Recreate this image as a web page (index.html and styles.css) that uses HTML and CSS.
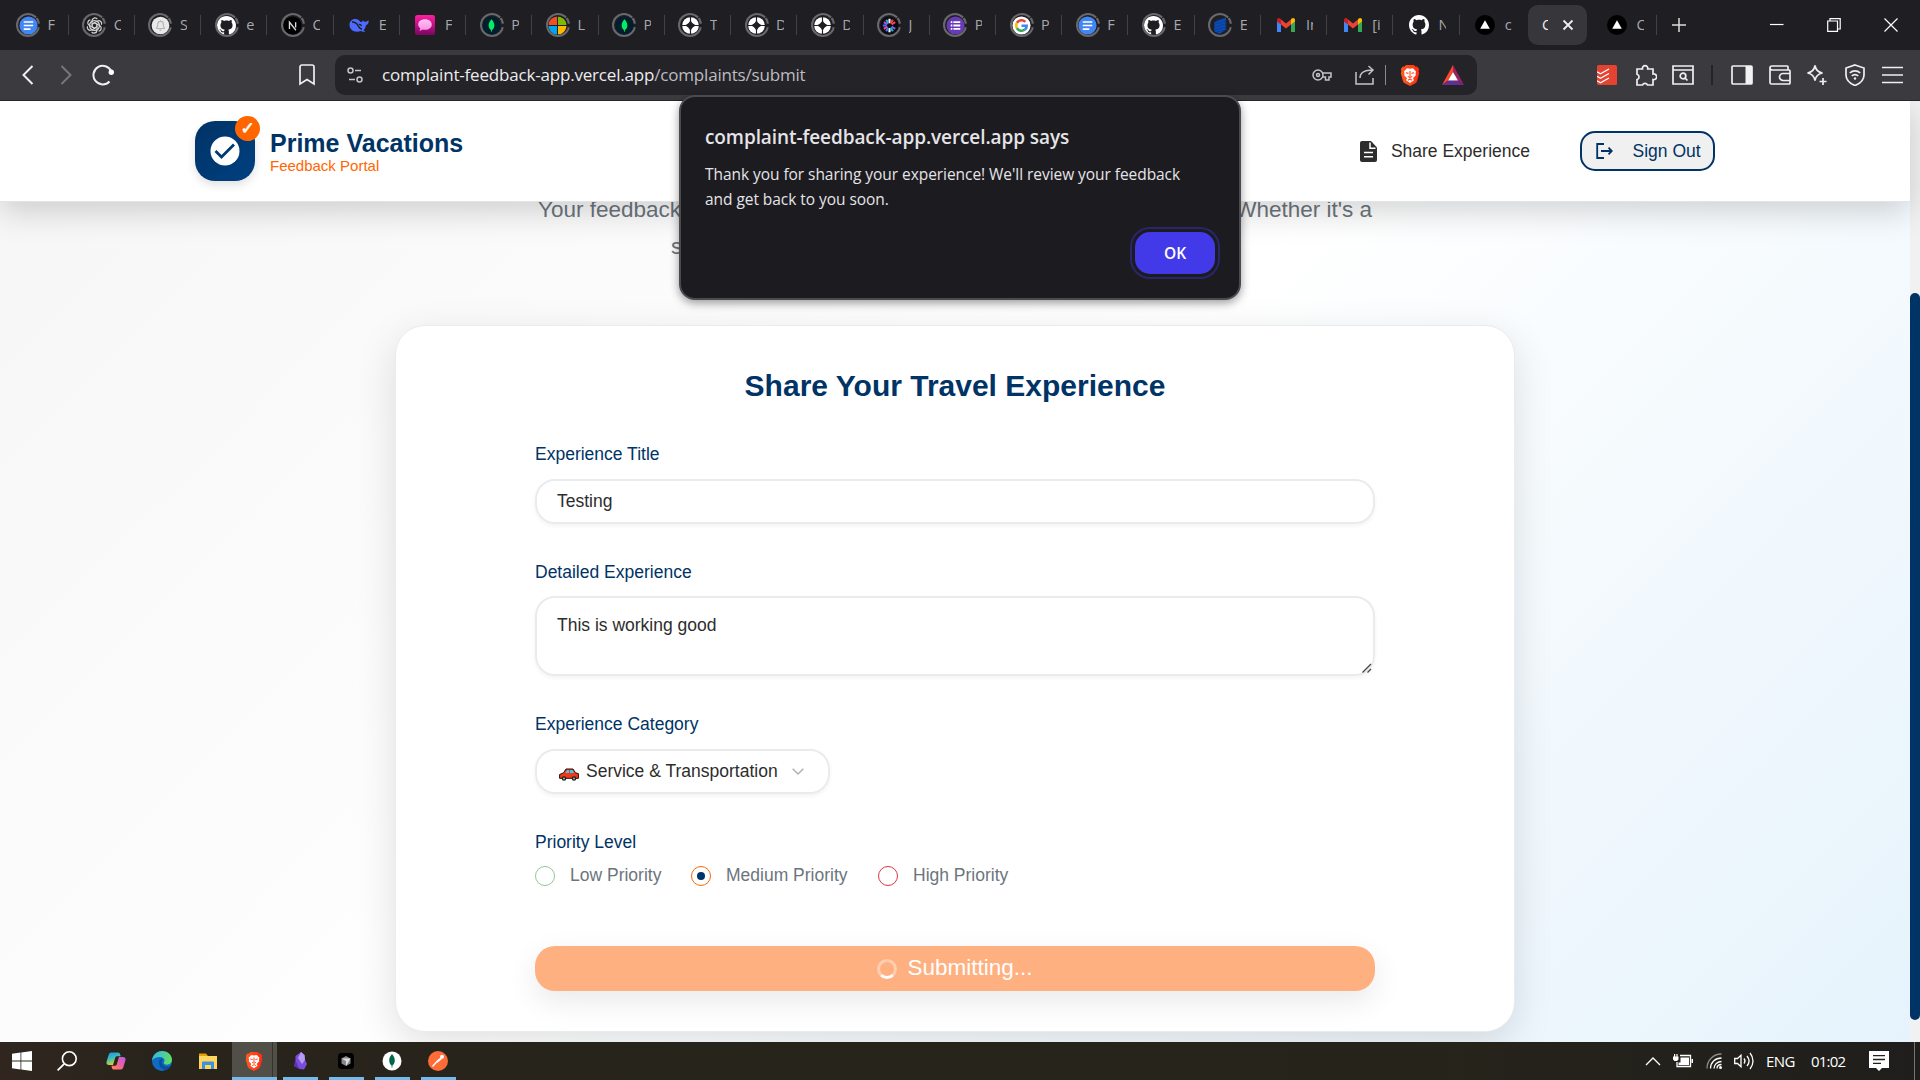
FILE: index.html
```html
<!DOCTYPE html>
<html lang="en">
<head>
<meta charset="utf-8">
<title>Prime Vacations – Feedback Portal</title>
<link rel="stylesheet" href="styles.css">
</head>
<body>
<svg class="defs" width="0" height="0" aria-hidden="true">
  <defs>
    <linearGradient id="gPink" x1="0" y1="0" x2="0" y2="1"><stop offset="0" stop-color="#ff1fa0"/><stop offset="1" stop-color="#7a0563"/></linearGradient>
    <linearGradient id="gBubble" x1="0" y1="0" x2="0" y2="1"><stop offset="0" stop-color="#ffc4f2"/><stop offset="1" stop-color="#ff8ae6"/></linearGradient>
    <linearGradient id="gEdge" x1="0" y1="0" x2="1" y2="0.3"><stop offset="0" stop-color="#2fb4ee"/><stop offset="1" stop-color="#5fdc6a"/></linearGradient>
    <linearGradient id="gCoA" x1="0" y1="0" x2="0.4" y2="1"><stop offset="0" stop-color="#1d8df0"/><stop offset="0.55" stop-color="#3bc3b4"/><stop offset="1" stop-color="#f5c624"/></linearGradient>
    <linearGradient id="gCoB" x1="1" y1="0" x2="0" y2="1"><stop offset="0" stop-color="#b05cf0"/><stop offset="0.5" stop-color="#f0609a"/><stop offset="1" stop-color="#fb8b50"/></linearGradient>
    <linearGradient id="gBrave" x1="0" y1="0" x2="1" y2="0"><stop offset="0" stop-color="#ff5a1f"/><stop offset="1" stop-color="#ff2c12"/></linearGradient>
  </defs>
  <symbol id="docs" viewBox="0 0 20 20"><circle cx="10" cy="10" r="9.500" fill="#4285f4"/><path d="M5 6.300h10M5 10h10M5 13.800h7" stroke="#fff" stroke-width="1.700"/></symbol>
  <symbol id="gpt" viewBox="0 0 20 20"><g fill="none" stroke="#d4d4d4" stroke-width="1.300"><path id="petal" d="M10 7.200 7.400 8.800V4.900a3.100 3.100 0 0 1 5.600-1.600"/><use href="#petal" transform="rotate(60 10 10)"/><use href="#petal" transform="rotate(120 10 10)"/><use href="#petal" transform="rotate(180 10 10)"/><use href="#petal" transform="rotate(240 10 10)"/><use href="#petal" transform="rotate(300 10 10)"/><circle cx="10" cy="10" r="5.200"/></g></symbol>
  <symbol id="bell" viewBox="0 0 20 20"><circle cx="10" cy="10" r="9.300" fill="#e9e9e9"/><path d="M6 13.200V12l1-1.200V8.600a3 3 0 0 1 6 0v2.200l1 1.200v1.200zM9 14.800h2M10 4.500v1" fill="none" stroke="#b3b3b3" stroke-width="1.200"/></symbol>
  <symbol id="github" viewBox="0 0 16 16"><path fill="#fff" d="M8 0C3.580 0 0 3.580 0 8c0 3.540 2.290 6.530 5.470 7.590.4.070.55-.17.55-.38 0-.19-.01-.82-.01-1.490-2.010.37-2.530-.49-2.690-.94-.09-.23-.48-.94-.82-1.130-.28-.15-.68-.52-.01-.53.63-.01 1.080.58 1.230.82.72 1.210 1.870.87 2.330.66.07-.52.28-.87.51-1.070-1.780-.2-3.640-.89-3.640-3.950 0-.87.31-1.590.82-2.150-.08-.2-.36-1.020.08-2.120 0 0 .67-.21 2.200.82.64-.18 1.320-.27 2-.27s1.360.09 2 .27c1.530-1.040 2.200-.82 2.200-.82.44 1.100.16 1.920.08 2.120.51.56.82 1.270.82 2.150 0 3.070-1.870 3.750-3.650 3.950.29.25.54.73.54 1.480 0 1.070-.01 1.930-.01 2.200 0 .21.15.46.55.38A8.010 8.010 0 0 0 16 8c0-4.420-3.580-8-8-8z"/></symbol>
  <symbol id="next" viewBox="0 0 20 20"><circle cx="10" cy="10" r="9.600" fill="#000"/><path d="M6.800 13.800V6.500l6.800 8.500M13.300 6.500v5.500" fill="none" stroke="#ddd" stroke-width="1.400"/></symbol>
  <symbol id="whale" viewBox="0 0 20 20"><path fill="#4d6bfe" d="M.5 9.500C.8 5.500 4 3.600 7.800 4.200c1.600.3 2 1 3 2 1.700 1.500 2.700 1.200 3-1.200.5 1 1 1.700 2.200 1.700 1.500 0 2.400-.7 3.600-1.500.3 2.600-.5 4.300-2.700 5-.3 2.400-1 3.800-2.600 5 .7.300 1.600.5 2.100 1-1.700 1-3.500.6-4.700-.2C6.500 18 .2 15.500.5 9.500z"/><path d="M3 7c3 0 5.500 2 6.500 4.500 1 1.500 2 2.500 3.500 2.800M10 9.500c1-.3 2 .4 2.500 1.500" stroke="#1f1e23" stroke-width="1.400" fill="none"/></symbol>
  <symbol id="chat" viewBox="0 0 20 20"><rect width="20" height="20" rx="2.500" fill="url(#gPink)"/><path fill="url(#gBubble)" d="M10 4.200c4 0 6.800 2.200 6.800 5.300S14 14.800 10 14.800c-.8 0-1.500-.1-2.200-.3L4.500 16l.8-2.700C4 12.300 3.200 11 3.200 9.500c0-3.100 2.800-5.300 6.800-5.300z"/></symbol>
  <symbol id="mongo" viewBox="0 0 20 20"><circle cx="10" cy="10" r="9.500" fill="#001e2b"/><path fill="#00ed64" d="M10 3.500c2 2.300 3 4.200 3 6.500 0 2.500-1.500 4.200-2.600 4.900v1.600h-.8v-1.600C8.500 14.200 7 12.500 7 10c0-2.300 1-4.200 3-6.500z"/></symbol>
  <symbol id="ms" viewBox="0 0 20 20"><clipPath id="msc"><circle cx="10" cy="10" r="9.500"/></clipPath><g clip-path="url(#msc)"><path fill="#f25022" d="M0 0h9.500v9.500H0z"/><path fill="#7fba00" d="M10.500 0H20v9.500h-9.500z"/><path fill="#00a4ef" d="M0 10.500h9.500V20H0z"/><path fill="#ffb900" d="M10.500 10.500H20V20h-9.500z"/></g></symbol>
  <symbol id="star" viewBox="0 0 20 20"><circle cx="10" cy="10" r="8.800" fill="#fff"/><path fill="#1f1e23" d="M10 3.500Q11.200 8.800 16.500 10 11.200 11.200 10 16.500 8.800 11.200 3.500 10 8.800 8.800 10 3.500z"/><path fill="#1f1e23" d="M10 6l4 4-4 4-4-4z"/><path d="M10 0v5M10 15v5M0 10h5M15 10h5" stroke="#1f1e23" stroke-width="1.200"/></symbol>
  <symbol id="burst" viewBox="0 0 20 20"><circle cx="10" cy="10" r="9.500" fill="#0c0b10"/><g stroke-width="2.200"><path d="M10 3v4.500M10 12.500V17" stroke="#fff"/><path d="M4 6.500l3.800 2.300" stroke="#d63aff"/><path d="M12.200 11.200l3.800 2.300" stroke="#7d5cff"/><path d="M4 13.500l3.800-2.300" stroke="#ff3d8b"/><path d="M12.200 8.800L16 6.500" stroke="#ff4154"/><path d="M6.500 4l2.300 3.800M11.200 12.200l2.300 3.800" stroke="#22b5bf"/><path d="M13.500 4l-2.300 3.800" stroke="#ff4154"/><path d="M8.800 12.200L6.500 16M3 10h4" stroke="#3a7bff"/></g></symbol>
  <symbol id="forms" viewBox="0 0 20 20"><circle cx="10" cy="10" r="9.500" fill="#673ab7"/><path d="M7.800 6.500H15M7.800 10H15M7.800 13.500H15" stroke="#fff" stroke-width="1.900"/><path d="M5 6.500h1.700M5 10h1.700M5 13.500h1.700" stroke="#fff" stroke-width="1.900"/></symbol>
  <symbol id="google" viewBox="0 0 20 20"><circle cx="10" cy="10" r="9.500" fill="#fff"/><g fill="none" stroke-width="2.700"><path d="M14 6.300A5.500 5.500 0 0 0 5.200 7.300" stroke="#ea4335"/><path d="M5.200 7.300a5.500 5.500 0 0 0 0 5.400" stroke="#fbbc05"/><path d="M5.200 12.700a5.500 5.500 0 0 0 8.300 1.600" stroke="#34a853"/><path d="M13.500 14.300c1.300-1 2-2.400 2-4.100H10" stroke="#4285f4"/></g></symbol>
  <symbol id="hex" viewBox="0 0 20 20"><path fill="#0b4bb3" d="M15.500 1.500v13L9 19l-5.500-3V6.500z"/><path d="M3 9l14-4M3 12l14-4M3 15l14-4M6 17l11-3M5 5l8-2" stroke="#08398f" stroke-width=".8"/></symbol>
  <symbol id="gmail" viewBox="0 0 20 20"><path fill="#4285f4" d="M1 17V6l4 3v8z"/><path fill="#34a853" d="M15 17V9l4-3v11z"/><path fill="#ea4335" d="M5 4.500l5 3.900 5-3.900V9.500l-5 3.900-5-3.900z"/><path fill="#c5221f" d="M1 5c0-2 2-2.700 3.300-1.500L5 4.200v5.300L1 6.600z"/><path fill="#fbbc04" d="M19 5c0-2-2-2.700-3.300-1.500L15 4.200v5.300l4-2.900z"/></symbol>
  <symbol id="vercel" viewBox="0 0 20 20"><circle cx="10" cy="10" r="10" fill="#000"/><path fill="#fff" d="M10 5.300l4.800 8.400H5.200z"/></symbol>
  <symbol id="brave" viewBox="0 0 20 22"><path fill="url(#gBrave)" d="M6 1h8l1.700 1.800 1.500-.2 2 2.600-.6 1.800.6 2.200-2.200 8c-.3 1-.9 1.600-1.700 2.100L10 22l-5.300-2.700c-.8-.5-1.400-1.100-1.700-2.100l-2.200-8L1.400 7l-.6-1.800 2-2.600 1.500.2z"/><path fill="#fff" d="M10 4.800l3-.5 3 3.200-.5 2.200.3 1.500-2.800 3.100 1 1.900L10 19l-4-2.800 1-1.900-2.800-3.100.3-1.500L4 7.500l3-3.200z"/><path d="M5.800 8.700l2.700.7M14.200 8.700l-2.700.7M10 7v5.500M7.800 12.500L10 13.500l2.200-1M8 16.200l2-1.200 2 1.200" stroke="#ff4a1c" stroke-width="1.100" fill="none"/></symbol>
</svg>

<div class="screen">
  <div class="tabs">
    <div class="tab"><span class="fav ringed"><svg><use href="#docs"/></svg></span><span class="tt">F</span></div>
    <div class="tab"><span class="fav ringed"><svg><use href="#gpt"/></svg></span><span class="tt">C</span></div>
    <div class="tab"><span class="fav ringed"><svg><use href="#bell"/></svg></span><span class="tt">S</span></div>
    <div class="tab"><span class="fav ringed"><svg><use href="#github"/></svg></span><span class="tt">e</span></div>
    <div class="tab"><span class="fav ringed"><svg><use href="#next"/></svg></span><span class="tt">C</span></div>
    <div class="tab"><span class="fav"><svg><use href="#whale"/></svg></span><span class="tt">E</span></div>
    <div class="tab"><span class="fav"><svg><use href="#chat"/></svg></span><span class="tt">F</span></div>
    <div class="tab"><span class="fav ringed"><svg><use href="#mongo"/></svg></span><span class="tt">P</span></div>
    <div class="tab"><span class="fav ringed"><svg><use href="#ms"/></svg></span><span class="tt">L</span></div>
    <div class="tab"><span class="fav ringed"><svg><use href="#mongo"/></svg></span><span class="tt">P</span></div>
    <div class="tab"><span class="fav ringed"><svg><use href="#star"/></svg></span><span class="tt">T</span></div>
    <div class="tab"><span class="fav ringed"><svg><use href="#star"/></svg></span><span class="tt">D</span></div>
    <div class="tab"><span class="fav ringed"><svg><use href="#star"/></svg></span><span class="tt">D</span></div>
    <div class="tab"><span class="fav ringed"><svg><use href="#burst"/></svg></span><span class="tt">J</span></div>
    <div class="tab"><span class="fav ringed"><svg><use href="#forms"/></svg></span><span class="tt">P</span></div>
    <div class="tab"><span class="fav ringed"><svg><use href="#google"/></svg></span><span class="tt">P</span></div>
    <div class="tab"><span class="fav ringed"><svg><use href="#docs"/></svg></span><span class="tt">F</span></div>
    <div class="tab"><span class="fav ringed"><svg><use href="#github"/></svg></span><span class="tt">E</span></div>
    <div class="tab"><span class="fav ringed"><svg><use href="#hex"/></svg></span><span class="tt">E</span></div>
    <div class="tab"><span class="fav"><svg><use href="#gmail"/></svg></span><span class="tt">In</span></div>
    <div class="tab"><span class="fav"><svg><use href="#gmail"/></svg></span><span class="tt">[i</span></div>
    <div class="tab"><span class="fav"><svg><use href="#github"/></svg></span><span class="tt">N</span></div>
    <div class="tab bare"><span class="fav"><svg><use href="#vercel"/></svg></span><span class="tt">c</span></div>
    <div class="tab active"><span class="tt">C</span><svg class="x" viewBox="0 0 12 12"><path d="M1.500 1.500l9 9M10.500 1.500l-9 9"/></svg></div>
    <div class="tab last"><span class="fav"><svg><use href="#vercel"/></svg></span><span class="tt">C</span></div>
    <svg class="plus" viewBox="0 0 14 14"><path d="M7 0v14M0 7h14"/></svg>
    <div class="winctl">
      <svg viewBox="0 0 14 14"><path d="M0 6.500h13.500"/></svg>
      <svg viewBox="0 0 14 14"><path d="M.7 3h9.800v10.300H.7zM3 3V.7h10.200V11h-2.700"/></svg>
      <svg viewBox="0 0 14 14"><path d="M.5.5l13 13M13.500.5l-13 13"/></svg>
    </div>
  </div>

  <div class="toolbar">
    <svg class="nav back" viewBox="0 0 12 20"><path d="M10.500 1L1.500 10l9 9"/></svg>
    <svg class="nav fwd" viewBox="0 0 12 20"><path d="M1.500 1l9 9-9 9"/></svg>
    <svg class="nav reload" viewBox="0 0 22 22"><path d="M17.500 17.500A9.300 9.300 0 1 1 19.300 7.500"/><circle cx="19.300" cy="8.300" r="2.700" class="solid"/></svg>
    <svg class="nav mark" viewBox="0 0 16 22"><path d="M1 3a2 2 0 0 1 2-2h10a2 2 0 0 1 2 2v17l-7-4.500L1 20z"/></svg>
    <div class="omni">
      <svg class="tune" viewBox="0 0 16 16"><circle cx="3.500" cy="3.500" r="2.500"/><path d="M8 3.500h6M2 12.500h6"/><circle cx="12.500" cy="12.500" r="2.500"/></svg>
      <div class="url">complaint-feedback-app.vercel.app<span>/complaints/submit</span></div>
      <svg class="key" viewBox="0 0 20 14"><circle cx="6" cy="7" r="5"/><circle cx="6" cy="7" r="1.500"/><path d="M10.800 5H19v4h-2v3h-3.500V9h-2.700"/></svg>
      <svg class="share" viewBox="0 0 20 20"><path d="M1 7v12h17v-6M5 13c0-5 4-8 13-8M13.500 1L18 5l-4.500 4.500"/></svg>
      <span class="bar"></span>
      <svg class="lion"><use href="#brave"/></svg>
      <svg class="bat" viewBox="0 0 22 20"><path fill="#ff4724" d="M11 0v7l-5 8.500L0 20z"/><path fill="#9e1f63" d="M11 0l11 20-6-4.500L11 7z"/><path fill="#662d91" d="M0 20l6-4.500h10L22 20z"/><path fill="#fff" d="M11 7l5 8.500H6z"/></svg>
    </div>
    <div class="exts">
      <svg class="todo" viewBox="0 0 20 20"><rect width="20" height="20" rx="1.500" fill="#e44332"/><path d="M0 6.800l3.500 2L12 4M0 11.300l3.500 2L12 8.500M0 15.800l3.500 2L12 13" fill="none" stroke="#fff" stroke-width="1.400"/></svg>
      <svg class="puz" viewBox="0 0 22 22"><path d="M2 5h5.500a2.700 2.700 0 1 1 5.200 0H18v5a2.900 2.900 0 1 1 0 5.600V21h-5.500a2.700 2.700 0 0 0-5 0H2v-5.400a2.800 2.800 0 0 0 0-5.400z"/></svg>
      <svg class="find" viewBox="0 0 22 20"><path d="M1 1h20v18H1zM1 5h20"/><circle cx="11" cy="11" r="2.800"/><path d="M13 13l2.500 2.500"/></svg>
      <span class="sep"></span>
      <svg class="side" viewBox="0 0 22 20"><rect x="1" y="1" width="20" height="18" rx="1"/><path class="solid" d="M14.500 1H21v18h-6.500z"/></svg>
      <svg class="wallet" viewBox="0 0 22 20"><path d="M19 5V1.800a.8.800 0 0 0-.8-.8H3a2 2 0 0 0 0 4h17a1 1 0 0 1 1 1v12a1 1 0 0 1-1 1H2.500A1.500 1.500 0 0 1 1 17.500V3M21 8.500h-7a3.500 3.500 0 0 0 0 7h7"/></svg>
      <svg class="leo" viewBox="0 0 22 22"><path d="M9 1.500c.8 4.800 2.700 6.700 7.500 7.500-4.800.8-6.700 2.700-7.500 7.500C8.200 11.700 6.300 9.800 1.500 9 6.300 8.200 8.200 6.300 9 1.500z"/><path d="M17 14v7M13.500 17.500h7"/></svg>
      <svg class="vpn" viewBox="0 0 20 22"><path d="M10 1l9 3v7c0 5-4 8.500-9 10.500C5 19.500 1 16 1 11V4z"/><path d="M4.800 9a7.500 7.500 0 0 1 10.400 0M6.800 12a4.500 4.500 0 0 1 6.400 0"/><circle cx="10" cy="14.500" r="1.200" class="solid"/></svg>
      <svg class="menu" viewBox="0 0 21 18"><path d="M0 1.500h21M0 9h21M0 16.500h21"/></svg>
    </div>
  </div>

  <div class="viewport">
    <div class="page">
      <header class="site">
        <div class="logo">
          <svg viewBox="0 0 30 30"><circle cx="15" cy="15" r="14.500" fill="#fff"/><path d="M5.500 15l6 6L24 8.500" fill="none" stroke="#003a74" stroke-width="2.800"/></svg>
          <span class="tick">✓</span>
        </div>
        <div class="brand"><strong>Prime Vacations</strong><small>Feedback Portal</small></div>
        <nav>
          <svg class="doc" viewBox="0 0 17 21"><path fill="#2d2d2d" d="M2 0h9l6 6.500V19a2 2 0 0 1-2 2H2a2 2 0 0 1-2-2V2a2 2 0 0 1 2-2z"/><path d="M10 1.500V7.300h5.500M4 11.500h9M4 15.800h9" stroke="#fff" stroke-width="1.500" fill="none"/></svg>
          <span class="link">Share Experience</span>
          <div class="signout"><svg viewBox="0 0 17 16"><path d="M8 1H1.200v14H8M5 8h10.500M12.500 4.700L15.800 8l-3.300 3.300"/></svg>Sign Out</div>
        </nav>
      </header>
      <main>
        <div class="hero">
          <div class="l1"><span>Your feedback</span><span>Whether it's a</span></div>
          <div class="l2">s</div>
        </div>
        <section class="card">
          <h1>Share Your Travel Experience</h1>
          <label>Experience Title</label>
          <div class="field one">Testing</div>
          <label>Detailed Experience</label>
          <div class="field area">This is working good<svg class="grip" viewBox="0 0 10 10"><path d="M.5 9.500l8.500-8.500M5.500 9.500l3.500-3.500"/></svg></div>
          <label>Experience Category</label>
          <div class="field pick">
            <svg class="car" viewBox="0 0 20 13"><path fill="#f03a17" stroke="#2a0a05" d="M.6 6.500l4-1.700L7 1h7l2.500 3.800 2.900.8v4.700H.6z"/><path fill="#41c8f5" d="M6.300 5l1.800-3H10v3zM11 2h2.500l1.800 3H11z"/><circle cx="5" cy="10.500" r="2.300" fill="#222"/><circle cx="15" cy="10.500" r="2.300" fill="#222"/><circle cx="5" cy="10.500" r=".9" fill="#bbb"/><circle cx="15" cy="10.500" r=".9" fill="#bbb"/></svg>
            <span>Service &amp; Transportation</span>
            <svg class="chev" viewBox="0 0 12 7"><path d="M.7.700L6 6 11.300.7"/></svg>
          </div>
          <label>Priority Level</label>
          <div class="radios">
            <i class="r low"></i><span class="wl">Low Priority</span>
            <i class="r med"></i><span class="wm">Medium Priority</span>
            <i class="r high"></i><span>High Priority</span>
          </div>
          <div class="submit"><i class="spin"></i><span>Submitting...</span></div>
        </section>
      </main>
    </div>
    <div class="scroll"><div class="thumb"></div></div>
  </div>

  <div class="taskbar">
    <div class="cell c1"><svg width="20" height="20" viewBox="0 0 20 20"><path fill="#fff" d="M0 2.800L8.500 1.600v8H0zM9.300 1.500L20 0v9.600H9.300zM0 10.400h8.500v8L0 17.200zM9.300 10.400H20V20L9.300 18.500z"/></svg></div>
    <div class="cell"><svg width="20" height="20" viewBox="0 0 20 20"><circle cx="12.300" cy="7.700" r="6.900" fill="none" stroke="#fff" stroke-width="1.600"/><path d="M7.200 12.800L.6 19.400" stroke="#fff" stroke-width="1.800"/></svg></div>
    <div class="cell c3"><svg width="20" height="20" viewBox="0 0 20 20"><path fill="url(#gCoA)" d="M5 1.500h7c1.200 0 1.800.8 2.100 1.800l.6 2H11c-1 0-1.500.6-1.800 1.500L7 14H3c-2 0-3-1.500-2.400-3.500l2-6.500C3.100 2.500 3.800 1.500 5 1.500z"/><path fill="url(#gCoB)" d="M15 18.500H8c-1.200 0-1.800-.8-2.100-1.800l-.5-2H9c1 0 1.500-.6 1.800-1.500L13 6h4c2 0 3 1.500 2.400 3.500l-2 6.500c-.5 1.500-1.200 2.500-2.400 2.500z"/></svg></div>
    <div class="cell c4"><svg width="20" height="20" viewBox="0 0 20 20"><circle cx="10" cy="10" r="10" fill="#0f6cc4"/><path fill="url(#gEdge)" d="M0 9.500C.5 4 5 0 10 0c6 0 10 4.300 10 8.800 0 3-2.300 4.900-5 4.900-2 0-3.500-.9-3.300-1.900.1-.5.800-1 .8-2.300C12.500 7.500 10.500 6 8 6 4.500 6 1.500 7.500 0 9.500z"/><path fill="#0a4f9e" d="M7.500 9C5.500 14.500 9.500 19 14.500 18.900c1.500-.9 3-2.200 4-4-3.500 1.500-8.500.5-8.500-4 0-1.200.5-2 .9-2.500C9.700 7.700 8.200 7.800 7.500 9z"/></svg></div>
    <div class="cell c5"><svg width="20" height="20" viewBox="0 0 20 20"><path fill="#e6a100" d="M1 2.500h7l2 2.500h-9z"/><path fill="#ffd560" d="M1 5h18v13H1z"/><path fill="#3d92dd" d="M4 18v-6.500a1 1 0 0 1 1-1h10a1 1 0 0 1 1 1V18h-3v-4H7v4z"/></svg></div>
    <div class="cell on"><svg width="18" height="20"><use href="#brave"/></svg></div>
    <div class="cell run"><svg width="16" height="20" viewBox="0 0 16 20"><path fill="#7c4ddb" d="M3.500 5L9 1l3.500 3 .5 5 2 4-3 5.500-4-.5-6-3 1.500-6z"/><path fill="#b79af5" d="M9 1l3.500 3 .5 5-3 4-4-6z"/><path fill="#5a2fb8" d="M3.500 9L7 18l-5-3z"/></svg></div>
    <div class="cell run"><svg width="16" height="16" viewBox="0 0 16 16"><rect width="16" height="16" rx="3.500" fill="#000"/><path fill="#888" d="M8 3l4.500 2.500v5L8 13l-4.500-2.500v-5z"/><path fill="#ddd" d="M3.500 5.500h9L8 13V8z"/></svg></div>
    <div class="cell run"><svg width="20" height="20" viewBox="0 0 20 20"><circle cx="10" cy="10" r="9.500" fill="#fff"/><path fill="#00684a" d="M10 3c2 2.300 2.800 4.200 2.800 6.500 0 2.500-1.300 4.200-2.400 5v2h-.8v-2c-1.100-.8-2.400-2.500-2.400-5C7.200 7.200 8 5.300 10 3z"/></svg></div>
    <div class="cell run"><svg width="20" height="20" viewBox="0 0 20 20"><circle cx="10" cy="10" r="10" fill="#ff6c37"/><path d="M4.500 15.500l4-4.500 3-2.500" stroke="#fff" stroke-width="1.300" fill="none"/><path fill="#fff" d="M8 10.500l4.500-4 1.500 1.500-5 4z"/><circle cx="14" cy="5.800" r="2" fill="#fff"/></svg></div>
    <div class="tray">
      <svg class="t1" viewBox="0 0 16 9"><path d="M1 8l7-7 7 7"/></svg>
      <svg class="t2" viewBox="0 0 20 14"><path d="M7 1.500h10.500v11H4V8"/><path class="solid" d="M7.500 3.500h8.500v7.500H5.500V8.500h2zM18.500 5H20v4h-1.500zM0 2.500h5.500v3L4 7H1.500L0 5.500zM1 0h1.200v2.500H1zM3.400 0h1.200v2.500H3.400z"/></svg>
      <svg class="t3" viewBox="0 0 16 16"><path class="dim" d="M1 15.500C1 7.500 7 1 15.500 1"/><path d="M4.500 15.500C4.500 9.500 9 5 15.500 5M8 15.500c0-4 3.500-7 7.500-7M11 15.500c0-2.500 2-4 4.500-4"/><circle cx="14.500" cy="14.500" r="1.500" class="solid"/></svg>
      <svg class="t4" viewBox="0 0 20 18"><path d="M.7 6.500h2.800L7 3.200v11.600L3.500 11.500H.7z"/><path d="M10 6.500c1.200 1.500 1.200 3.500 0 5M13 4c2.500 3 2.500 7 0 10M16 1c4 4.800 4 11.200 0 16"/></svg>
      <span class="lang">ENG</span><span class="clock">01:02</span>
      <svg class="t5" viewBox="0 0 20 20"><path class="solid" d="M0 0h20v17h-7l-3 3-3-3H0z"/><path d="M4 4.700h12M4 8.500h12M4 12.300h8" stroke="#22211b"/></svg>
      <i class="edge"></i>
    </div>
  </div>

  <div class="dialog">
    <h2>complaint-feedback-app.vercel.app says</h2>
    <p class="m1">Thank you for sharing your experience! We'll review your feedback</p>
    <p class="m2">and get back to you soon.</p>
    <div class="ok">OK</div>
  </div>
</div>
</body>
</html>
```
FILE: styles.css
```css
* { box-sizing: border-box; }
html, body { margin: 0; padding: 0; }
body { width: 1920px; height: 1080px; overflow: hidden; font-family: "Liberation Sans", Arial, sans-serif; }
svg { display: block; flex: none; }
.defs { position: absolute; }
.screen { position: relative; width: 1920px; height: 1080px; display: flex; flex-direction: column; overflow: hidden; }

/* tab strip */
.tabs { height: 50px; flex: none; background: #1f1e23; display: flex; align-items: center; padding-left: 2.500px; }
.tab { width: 66.240px; height: 20px; flex: none; display: flex; align-items: center; border-right: 1px solid #424146; padding-left: 13.500px; }
.fav { width: 24px; height: 24px; flex: none; display: flex; align-items: center; justify-content: center; margin: -2px 0; }
.fav svg { width: 20px; height: 20px; }
.ringed { position: relative; }
.ringed::before { content: ""; position: absolute; inset: 0; border-radius: 50%; border: 2px solid #69686d; border-right-style: dashed; }
.ringed svg { width: 19px; height: 19px; }
.tt { width: 7.500px; margin-left: 7.500px; overflow: hidden; white-space: nowrap; font: 14.500px/20px "Open Sans", sans-serif; color: #a9a8ac; }
.tab.bare { border-color: transparent; }
.tab.active { width: 59px; height: 40px; background: #37363b; border: 0; border-radius: 10px; margin-left: 2px; padding-left: 14px; }
.tab.active .tt { margin: 0; width: 6px; color: #eee; }
.tab.active .x { width: 12px; height: 12px; margin-left: 14px; stroke: #eee; stroke-width: 1.800; }
.tab.last { margin-left: 4px; width: 66px; padding-left: 14px; }
.plus { width: 14px; height: 14px; margin-left: 15.500px; stroke: #ddd; stroke-width: 1.500; }
.winctl { margin-left: auto; margin-right: 22px; display: flex; gap: 43px; }
.winctl svg { width: 14px; height: 14px; fill: none; stroke: #fff; stroke-width: 1.200; }

/* toolbar */
.toolbar { height: 51px; flex: none; background: #3b3a3f; border-bottom: 1px solid #29232b; display: flex; align-items: center; }
.nav { fill: none; stroke: #efeff0; stroke-width: 2; }
.back { width: 12px; height: 20px; margin-left: 21.500px; }
.fwd { width: 12px; height: 20px; margin-left: 26px; stroke: #77767a; }
.reload { width: 22px; height: 22px; margin-left: 20px; }
.reload .solid { fill: #fff; stroke: none; }
.mark { width: 16px; height: 22px; margin-left: 185px; stroke-width: 1.700; }
.omni { width: 1142px; height: 40px; margin-left: 20.500px; background: #242328; border-radius: 10px; display: flex; align-items: center; padding-left: 12px; }
.omni > svg { fill: none; stroke: #c4c3c6; stroke-width: 1.500; }
.tune { width: 16px; height: 16px; }
.url { width: 929px; margin-left: 19px; font: 17px/24px "Open Sans", sans-serif; letter-spacing: -0.190px; color: #ececee; white-space: nowrap; }
.url span { color: #bdbcc0; }
.key { width: 20px; height: 14px; margin-left: 1px; }
.share { width: 20px; height: 20px; margin-left: 23px; }
.bar { width: 1px; height: 20px; background: #8b8a8e; margin-left: 10px; }
.omni > .lion { width: 20px; height: 22px; margin-left: 14px; stroke: none; }
.omni > .bat { width: 22px; height: 20px; margin-left: 22px; stroke: none; }
.exts { display: flex; align-items: center; }
.exts svg { fill: none; stroke: #efeff0; stroke-width: 1.700; height: 20px; width: 22px; }
.exts .solid { fill: #f2f2f4; stroke: none; }
.exts .todo { width: 20px; margin-left: 120px; stroke: none; }
.exts .puz { height: 22px; margin-left: 18px; }
.exts .find { margin-left: 15px; }
.sep { width: 2px; height: 20px; background: #242328; margin-left: 17px; }
.exts .side { margin-left: 18px; }
.exts .wallet { margin-left: 16px; }
.exts .leo { height: 22px; margin-left: 15px; }
.exts .vpn { width: 20px; height: 22px; margin-left: 17px; }
.exts .menu { width: 21px; height: 18px; margin-left: 17px; }

/* page */
.viewport { height: 941px; flex: none; display: flex; overflow: hidden; }
.page { width: 1910px; background: linear-gradient(135deg, #f6f6f6 0%, #ffffff 50%, #e6f3fc 100%); }
.site { position: relative; z-index: 2; height: 101px; background: #fff; border-bottom: 1px solid #e2e4e7; box-shadow: 0 10px 30px rgba(0,0,0,.17); display: flex; align-items: center; padding: 0 195px; }
.logo { position: relative; width: 60px; height: 60px; border-radius: 20px; background: linear-gradient(135deg, #003366, #004080); box-shadow: 0 4px 10px rgba(0,0,0,.12); display: flex; align-items: center; justify-content: center; }
.logo svg { width: 30px; height: 30px; }
.tick { position: absolute; top: -5px; right: -5px; width: 25px; height: 25px; border-radius: 50%; background: #ff6600; color: #fff; font: bold 17px/25px "DejaVu Sans", sans-serif; -webkit-text-stroke: .7px #fff; text-align: center; }
.brand { margin-left: 15px; padding-top: 2px; display: flex; flex-direction: column; }
.brand strong { font-size: 25px; line-height: 27px; color: #003366; padding-top: 1px; }
.brand small { font-size: 15px; line-height: 18px; color: #ff6600; }
.site nav { margin-left: auto; display: flex; align-items: center; font-size: 17.500px; color: #2d2d2d; }
.doc { width: 17px; height: 21px; }
.link { margin-left: 14px; }
.signout { margin-left: 50px; width: 135px; height: 40px; border: 2px solid #003366; border-radius: 15px; background: #f0f0f0; color: #003366; display: flex; align-items: center; padding-left: 14px; gap: 19.500px; white-space: nowrap; }
.signout svg { width: 17px; height: 16px; fill: none; stroke: #003366; stroke-width: 1.800; }
.hero { width: 834px; margin: -11px auto 0; font-size: 22.500px; line-height: 37px; color: #6c757d; }
.l1 { display: flex; justify-content: space-between; }
.l2 { padding-left: 133px; }
.card { width: 1120px; height: 707px; margin: 60px auto 0; background: #fff; border: 1px solid #e9ecef; border-radius: 30px; box-shadow: 0 12px 40px rgba(0,0,0,.12); padding: 42px 139px 0; display: flex; flex-direction: column; align-items: stretch; }
.card h1 { margin: 0 0 40px; font-size: 30px; line-height: 36px; font-weight: bold; color: #003366; text-align: center; }
.card label { font-size: 17.500px; line-height: 20px; height: 20px; color: #003366; }
.field { border: 2px solid #e9ecef; border-radius: 20px; box-shadow: 0 2px 4px rgba(0,0,0,.05); font-size: 17.500px; color: #2d2d2d; padding-left: 20px; margin-top: 15px; }
.one { height: 45px; line-height: 41px; margin-bottom: 38px; }
.area { position: relative; height: 80px; line-height: 20px; padding-top: 17px; margin-top: 14px; margin-bottom: 38px; }
.grip { position: absolute; right: 1px; bottom: 1px; width: 10px; height: 10px; stroke: #444; stroke-width: 1.300; fill: none; }
.pick { width: 295px; height: 45px; display: flex; align-items: center; margin-bottom: 38px; padding-left: 22px; white-space: nowrap; }
.car { width: 20px; height: 13px; margin-top: 6px; }
.pick span { margin-left: 7px; }
.chev { width: 12px; height: 7px; margin-left: 14px; fill: none; stroke: #aab0b6; stroke-width: 1.400; }
.radios { height: 20px; margin-top: 13px; display: flex; align-items: center; font-size: 17.500px; line-height: 20px; color: #6c757d; white-space: nowrap; }
.r { width: 20px; height: 20px; border-radius: 50%; border: 1px solid #8fc99a; margin: 2px 15px 0 0; flex: none; display: flex; align-items: center; justify-content: center; }
.med { border-color: #ff6600; }
.med::after { content: ""; width: 8px; height: 8px; border-radius: 50%; background: #003366; }
.high { border-color: #dc3545; }
.wl { width: 121px; }
.wm { width: 152px; }
.submit { height: 45px; margin-top: 61px; border-radius: 20px; background: #ffb080; box-shadow: 0 10px 30px rgba(0,0,0,.09); color: #fff; font-size: 22.500px; display: flex; align-items: center; justify-content: center; gap: 10px; }
.submit span { padding-bottom: 2px; }
.spin { width: 20px; height: 20px; border-radius: 50%; border: 3px solid #ffcdb0; border-bottom-color: #fff; margin-top: 1px; }
.scroll { width: 10px; background: #f1f1f1; padding-top: 192px; }
.thumb { height: 727px; border-radius: 5px; background: #003366; }

/* taskbar */
.taskbar { position: relative; z-index: 3; height: 38px; flex: none; background: linear-gradient(90deg, #30261f 0, #28241b 160px, #26241a 1400px, #1f1e1c 100%); display: flex; }
.cell { width: 46px; height: 38px; flex: none; display: flex; align-items: center; justify-content: center; }
.cell.c1 { width: 44px; }
.cell.c3 { width: 52px; }
.cell.c4 { width: 40px; }
.cell.c5 { width: 50px; padding-left: 2px; }
.cell.on { width: 45px; background: linear-gradient(90deg, #514f48 40px, #35332d 40px, #35332d 41px, #514f48 41px); border-bottom: 3px solid #76b9ed; padding: 3px 1px 0 0; }
.cell.run { width: 35px; margin-left: 6px; margin-right: 5px; border-bottom: 3px solid #76b9ed; padding: 3px 1px 0 0; }
.tray { margin-left: auto; display: flex; align-items: center; color: #fff; font: 15px/20px "Open Sans", sans-serif; }
.tray svg { fill: none; stroke: #fff; stroke-width: 1.300; }
.tray .solid { fill: #fff; stroke: none; }
.tray .dim { stroke: #8d8c88; }
.t1 { width: 16px; height: 9px; }
.t2 { width: 20px; height: 14px; margin-left: 12px; }
.t3 { width: 16px; height: 16px; margin-left: 13px; }
.t4 { width: 20px; height: 18px; margin-left: 12px; }
.lang { width: 29px; margin-left: 12px; letter-spacing: -0.600px; white-space: nowrap; }
.clock { width: 36px; margin-left: 16px; letter-spacing: -0.800px; white-space: nowrap; }
.t5 { width: 20px; height: 20px; margin-left: 22px; }
.edge { width: 1px; height: 38px; background: #75746f; margin: 0 5px 0 25px; }

/* alert */
.dialog { position: absolute; z-index: 5; left: 679px; top: 95px; width: 562px; height: 205px; border-radius: 16px; background: #1c1b1f; border: 2px solid #4b4a4f; box-shadow: 0 3px 10px rgba(0,0,0,.4); padding: 26px 0 0 24px; font-family: "Open Sans", sans-serif; color: #e5e4e8; white-space: nowrap; }
.dialog h2 { margin: 0; font-size: 19px; line-height: 28px; font-weight: 600; letter-spacing: -0.090px; }
.dialog p { margin: 0; font-size: 15.500px; line-height: 25px; letter-spacing: -0.055px; }
.dialog .m1 { margin-top: 11px; }
.ok { width: 80px; height: 42px; margin: 20px 0 0 430px; border-radius: 15px; background: #423ae8; color: #fff; font-weight: 600; font-size: 15.500px; line-height: 43px; text-align: center; box-shadow: 0 0 0 3px #1c1b1f, 0 0 0 5px #29276a; }
```
